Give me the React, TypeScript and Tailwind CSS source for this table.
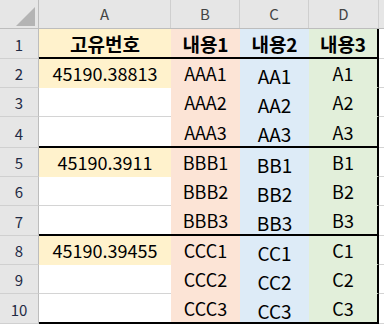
import React from 'react';
import { clsx } from 'clsx';

type Row = {
    n: number;
    h: string;
    cells: string[];
    thick?: boolean;
    head?: boolean;
};

const rows: Row[] = [
    { n: 1, h: 'h-[30px]', cells: ['고유번호', '내용1', '내용2', '내용3'], thick: true, head: true },
    { n: 2, h: 'h-[29px]', cells: ['45190.38813', 'AAA1', 'AA1', 'A1'] },
    { n: 3, h: 'h-[29px]', cells: ['', 'AAA2', 'AA2', 'A2'] },
    { n: 4, h: 'h-[31px]', cells: ['', 'AAA3', 'AA3', 'A3'], thick: true },
    { n: 5, h: 'h-[29px]', cells: ['45190.3911', 'BBB1', 'BB1', 'B1'] },
    { n: 6, h: 'h-[29px]', cells: ['', 'BBB2', 'BB2', 'B2'] },
    { n: 7, h: 'h-[30px]', cells: ['', 'BBB3', 'BB3', 'B3'], thick: true },
    { n: 8, h: 'h-[29px]', cells: ['45190.39455', 'CCC1', 'CC1', 'C1'] },
    { n: 9, h: 'h-[29px]', cells: ['', 'CCC2', 'CC2', 'C2'] },
    { n: 10, h: 'h-[30px]', cells: ['', 'CCC3', 'CC3', 'C3'], thick: true },
];

const widths = ['w-[132px]', 'w-[69px]', 'w-[69px]', 'w-[70px]'];
const fills = ['bg-[#fff2cc]', 'bg-[#fce4d6]', 'bg-[#ddebf7]', 'bg-[#e2efda]'];
const fillBorders = ['border-b-[#fff2cc]', 'border-b-[#fce4d6]', 'border-b-[#ddebf7]', 'border-b-[#e2efda]'];

export default function App() {
    return (
        <div className="w-[384px] h-[324px] overflow-hidden bg-white text-black font-['Noto_Sans_CJK_KR','Noto_Sans',sans-serif]">
            {/* column letters */}
            <div className="flex h-[29px] bg-[#e6e6e6] border-b border-b-[#bdbdbd]">
                <div className="relative w-[39px] border-r border-r-[#bdbdbd]">
                    <div className="absolute left-[16px] top-[7px] w-0 h-0 border-l-[19px] border-l-transparent border-b-[19px] border-b-[#b4b4b4]" />
                </div>
                {['A', 'B', 'C', 'D'].map((l, i) => (
                    <div
                        key={l}
                        className={clsx(
                            widths[i],
                            'flex items-center justify-center text-[15px] text-[#444] border-r border-r-[#cfcfcf]',
                            i === 3 && 'w-[69px]'
                        )}
                    >
                        {l}
                    </div>
                ))}
                <div className="flex-1" />
            </div>

            {rows.map((r) => {
                const blankA = r.cells[0] === '' && !r.head;
                return (
                    <div key={r.n} className={clsx('flex', r.h)}>
                        <div className="w-[39px] flex items-end justify-center pb-[2px] bg-[#e6e6e6] border-r border-r-[#bdbdbd] border-b border-b-[#d0d0d0] text-[15px] text-[#1f2a44]">
                            {r.n}
                        </div>
                        {r.cells.map((c, i) => (
                            <div
                                key={i}
                                className={clsx(
                                    widths[i],
                                    'flex items-center justify-center',
                                    i === 0 && blankA ? 'bg-white' : fills[i],
                                    r.thick
                                        ? 'border-b-2 border-b-black'
                                        : clsx('border-b', i === 0 && blankA ? 'border-b-[#d4d4d4]' : fillBorders[i]),
                                    i === 3 && 'border-r-2 border-r-black',
                                    r.head ? 'text-[19px] font-bold' : 'text-[18px]',
                                    i === 2 && !r.head && 'pt-1 text-[19px]'
                                )}
                            >
                                <span className="leading-none">{c}</span>
                            </div>
                        ))}
                        <div className="flex-1 border-b border-b-[#d4d4d4]" />
                    </div>
                );
            })}
        </div>
    );
}
